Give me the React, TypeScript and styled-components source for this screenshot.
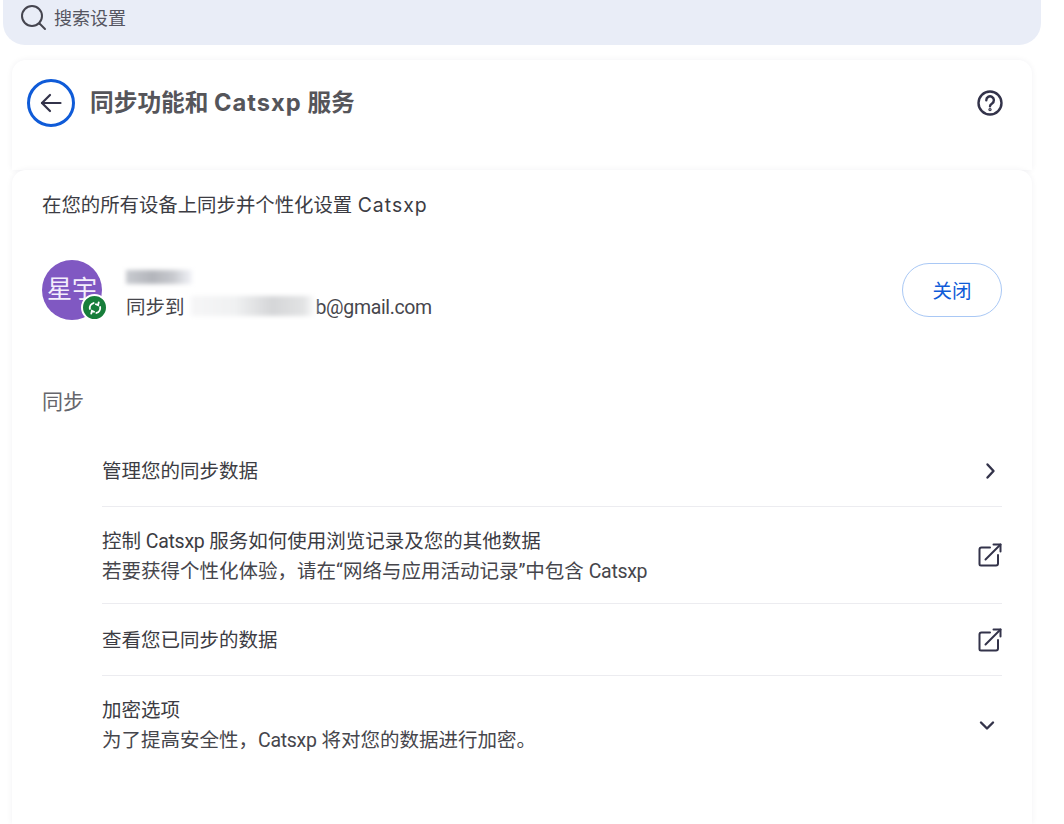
import React from "react";
import styled, { createGlobalStyle } from "styled-components";

const GlobalStyle = createGlobalStyle`
  html, body {
    margin: 0;
    padding: 0;
    background: #ffffff;
    overflow: hidden;
  }
  body {
    font-family: "Roboto", "Noto Sans CJK SC", sans-serif;
    color: #3c3c43;
  }
`;

const Page = styled.div`
  width: 1064px;
  height: 824px;
  overflow: hidden;
  display: flex;
  flex-direction: column;
`;

const SearchBar = styled.div`
  box-sizing: border-box;
  width: 1038px;
  height: 45px;
  margin: 0 0 15px 3px;
  padding: 0 0 9px 16px;
  display: flex;
  align-items: center;
  gap: 7px;
  background: #e9edf7;
  border-radius: 0 0 22px 22px;
`;

const SearchText = styled.span`
  margin-bottom: 2px;
  font-size: 18px;
  color: #555560;
`;

const Card = styled.section`
  width: 1020px;
  margin-left: 12px;
  background: #ffffff;
  border-radius: 14px 14px 0 0;
  box-shadow: 0 0 6px rgba(40, 40, 70, 0.06);
`;

const HeaderCard = styled(Card)`
  box-sizing: border-box;
  height: 110px;
  padding: 19px 28px 0 15px;
  display: flex;
  align-items: flex-start;
  justify-content: space-between;
`;

const BackButton = styled.button`
  box-sizing: border-box;
  width: 48px;
  height: 48px;
  padding: 0;
  border: 3px solid #0f5bd8;
  border-radius: 50%;
  background: transparent;
  display: flex;
  align-items: center;
  justify-content: center;
`;

const TitleGroup = styled.div`
  display: flex;
  align-items: center;
  gap: 15px;
`;

const Title = styled.h1`
  margin: 0 0 4px;
  font-family: "Inter", "Noto Sans CJK SC", sans-serif;
  font-size: 23.7px;
  font-weight: 700;
  color: #55555a;
`;

const Brand = styled.span<{ $spacing: number }>`
  letter-spacing: ${({ $spacing }) => $spacing}px;
`;

const HelpIcon = styled.div`
  margin-top: 10px;
  width: 28px;
  height: 28px;
`;

const BodyCard = styled(Card)`
  flex: 1;
  box-sizing: border-box;
  padding: 22px 30px 0;
`;

const Intro = styled.p`
  margin: 0;
  font-family: "Inter", "Noto Sans CJK SC", sans-serif;
  font-size: 19.4px;
  line-height: 26px;
  color: #3c3c43;
`;

const AccountRow = styled.div`
  margin-top: 42px;
  height: 60px;
  display: flex;
  align-items: center;
`;

const AvatarWrap = styled.div`
  position: relative;
  width: 60px;
  height: 60px;
  flex: none;
`;

const Avatar = styled.div`
  width: 60px;
  height: 60px;
  border-radius: 50%;
  background: #8058c2;
  color: #f4eefc;
  font-size: 25px;
  line-height: 60px;
  text-align: center;
  white-space: nowrap;
`;

const SyncBadge = styled.div`
  position: absolute;
  right: -6px;
  bottom: -1px;
  box-sizing: border-box;
  width: 27px;
  height: 27px;
  border: 2.5px solid #ffffff;
  border-radius: 50%;
  background: #177e3a;
  display: flex;
  align-items: center;
  justify-content: center;
`;

const AccountText = styled.div`
  flex: 1;
  margin-left: 24px;
  padding-top: 10px;
`;

const BlurredName = styled.div`
  width: 66px;
  height: 14px;
  margin-bottom: 11px;
  background: linear-gradient(90deg, #c8cbd0 0%, #b3b5bb 40%, #c6c8cd 70%, #f2f3f8 100%);
  filter: blur(2px);
`;

const SyncLine = styled.div`
  display: flex;
  align-items: center;
  font-size: 19.5px;
  line-height: 26px;
  color: #46464c;
  white-space: nowrap;
`;

const EmailMask = styled.span`
  flex: none;
  width: 125px;
  height: 20px;
  margin: -4px 0 0 6px;
  background: linear-gradient(90deg, #f6f6f7 0%, #f0f1f2 35%, #d5d6d8 65%, #e2e3e4 90%, #ffffff 100%);
  filter: blur(2px);
`;

const Email = styled.span`
  letter-spacing: -0.35px;
`;

const OffButton = styled.button`
  box-sizing: border-box;
  width: 100px;
  height: 54px;
  margin-top: -1px;
  border: 1px solid #a9c8f5;
  border-radius: 27px;
  background: #ffffff;
  color: #0f5bd8;
  font-family: inherit;
  font-size: 19.5px;
`;

const SectionLabel = styled.h2`
  margin: 68px 0 0;
  padding-top: 1px;
  font-size: 21px;
  font-weight: 400;
  line-height: 26px;
  color: #66666c;
`;

const List = styled.div`
  margin: 20px 0 0 60px;
`;

const Row = styled.div<{ $height: number }>`
  box-sizing: border-box;
  height: ${({ $height }) => $height}px;
  display: flex;
  align-items: center;
  justify-content: space-between;
  border-bottom: 1px solid #ececf0;
  &:last-child {
    border-bottom: none;
  }
`;

const RowCopy = styled.div`
  padding-top: 3px;
`;

const RowText = styled.div`
  font-size: 19.5px;
  line-height: 30px;
  color: #3c3c43;
`;

const RowSub = styled.div`
  font-size: 19.5px;
  line-height: 30px;
  color: #46464c;
`;

const IconSlot = styled.div<{ $offset?: number }>`
  width: 24px;
  height: 24px;
  flex: none;
  display: flex;
  align-items: center;
  justify-content: center;
  transform: translateX(${({ $offset }) => $offset || 0}px);
`;

const iconColor = "#33334a";

const SearchIcon = () => (
  <svg width="28" height="28" viewBox="0 0 28 28" fill="none" stroke="#45454f" strokeWidth="2">
    <circle cx="13" cy="12" r="10" />
    <path d="M20.5 19.5 L26 25" strokeLinecap="round" />
  </svg>
);

const ExternalIcon = () => (
  <svg width="24" height="24" viewBox="0 0 24 24" fill="none" stroke={iconColor} strokeWidth="2" strokeLinecap="round" strokeLinejoin="round">
    <path d="M12 4.5H3.5a2 2 0 0 0-2 2V21a1.5 1.5 0 0 0 1.5 1.500h15a2 2 0 0 0 2-2V12" />
    <path d="M7.500 16.500 22.500 1.500" />
    <path d="M15.500 1.500h7v7" />
  </svg>
);

const ChevronRight = () => (
  <svg width="24" height="24" viewBox="0 0 24 24" fill="none" stroke={iconColor} strokeWidth="2.400" strokeLinecap="round" strokeLinejoin="round">
    <path d="M8.500 5.500 14.500 12 8.500 18.500" />
  </svg>
);

const ChevronDown = () => (
  <svg width="24" height="24" viewBox="0 0 24 24" fill="none" stroke={iconColor} strokeWidth="2.400" strokeLinecap="round" strokeLinejoin="round">
    <path d="M6 9.500 12 15.500 18 9.500" />
  </svg>
);

export default function App() {
  return (
    <Page>
      <GlobalStyle />
      <SearchBar>
        <SearchIcon />
        <SearchText>搜索设置</SearchText>
      </SearchBar>

      <HeaderCard>
        <TitleGroup>
          <BackButton aria-label="返回">
            <svg width="26" height="26" viewBox="0 0 26 26" fill="none" stroke={iconColor} strokeWidth="2.200" strokeLinecap="round" strokeLinejoin="round">
              <path d="M22.500 13H4" />
              <path d="M12 5 4 13 12 21" />
            </svg>
          </BackButton>
          <Title>
            同步功能和 <Brand $spacing={1}>Catsxp</Brand> 服务
          </Title>
        </TitleGroup>
        <HelpIcon>
          <svg width="28" height="28" viewBox="0 0 28 28" fill="none" stroke={iconColor} strokeWidth="2.400" strokeLinecap="round">
            <circle cx="14" cy="14" r="11.500" />
            <path d="M10.300 11.200a3.800 3.800 0 1 1 5.800 3.200c-1.300.8-2.100 1.500-2.100 2.800" />
            <circle cx="14" cy="20.600" r="0.500" fill={iconColor} />
          </svg>
        </HelpIcon>
      </HeaderCard>

      <BodyCard>
        <Intro>
          在您的所有设备上同步并个性化设置 <Brand $spacing={1}>Catsxp</Brand>
        </Intro>

        <AccountRow>
          <AvatarWrap>
            <Avatar>星宇</Avatar>
            <SyncBadge>
              <svg width="14" height="14" viewBox="0 0 15 15" fill="none" stroke="#ffffff" strokeWidth="2" strokeLinecap="round">
                <path d="M2 8.500A5.500 5.500 0 0 1 6 2.200" />
                <path d="M13 6.500A5.500 5.500 0 0 1 9 12.800" />
                <path d="M11.500 1.500 10.800 4.500 8.500 3.500" />
                <path d="M3.500 13.500 4.200 10.500 6.500 11.500" />
              </svg>
            </SyncBadge>
          </AvatarWrap>
          <AccountText>
            <BlurredName />
            <SyncLine>
              同步到
              <EmailMask />
              <Email>b@gmail.com</Email>
            </SyncLine>
          </AccountText>
          <OffButton>关闭</OffButton>
        </AccountRow>

        <SectionLabel>同步</SectionLabel>

        <List>
          <Row $height={72}>
            <RowCopy>
              <RowText>管理您的同步数据</RowText>
            </RowCopy>
            <IconSlot $offset={1}>
              <ChevronRight />
            </IconSlot>
          </Row>
          <Row $height={97}>
            <RowCopy>
              <RowText>
                控制 <Brand $spacing={-0.3}>Catsxp</Brand> 服务如何使用浏览记录及您的其他数据
              </RowText>
              <RowSub>
                若要获得个性化体验，请在“网络与应用活动记录”中包含 <Brand $spacing={-0.3}>Catsxp</Brand>
              </RowSub>
            </RowCopy>
            <IconSlot>
              <ExternalIcon />
            </IconSlot>
          </Row>
          <Row $height={72}>
            <RowCopy>
              <RowText>查看您已同步的数据</RowText>
            </RowCopy>
            <IconSlot>
              <ExternalIcon />
            </IconSlot>
          </Row>
          <Row $height={97}>
            <RowCopy>
              <RowText>加密选项</RowText>
              <RowSub>
                为了提高安全性，<Brand $spacing={-0.3}>Catsxp</Brand> 将对您的数据进行加密。
              </RowSub>
            </RowCopy>
            <IconSlot $offset={-3}>
              <ChevronDown />
            </IconSlot>
          </Row>
        </List>
      </BodyCard>
    </Page>
  );
}
